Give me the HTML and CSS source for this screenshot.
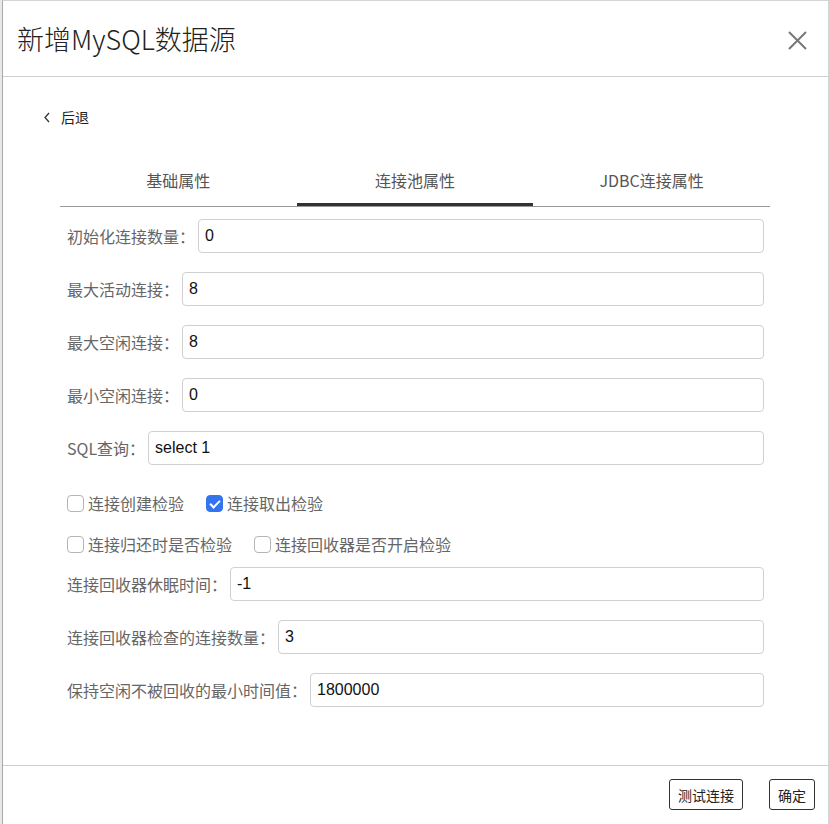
FILE: index.html
```html
<!DOCTYPE html>
<html lang="zh-CN">
<head>
  <meta charset="UTF-8">
  <title>新增MySQL数据源</title>
  <link rel="stylesheet" href="styles.css">
</head>
<body>

  <div class="dialog">
    <div class="dialog-header">
      <h2>新增MySQL数据源</h2>
      <span class="close">
        <svg width="19" height="19" viewBox="0 0 19 19"><path d="M1 1 L18 18 M18 1 L1 18" stroke="#777" stroke-width="2" fill="none"/></svg>
      </span>
    </div>

    <div class="dialog-body">
      <div class="back">
        <svg width="8" height="11" viewBox="0 0 8 11"><polyline points="6,1 2,5.5 6,10" stroke="#333" stroke-width="1.3" fill="none"/></svg>
        <span>后退</span>
      </div>

      <div class="tabs">
        <div class="tab">基础属性</div>
        <div class="tab active">连接池属性</div>
        <div class="tab">JDBC连接属性</div>
      </div>

      <div class="form">
        <div class="field"><label>初始化连接数量：</label><input value="0"></div>
        <div class="field"><label>最大活动连接：</label><input value="8"></div>
        <div class="field"><label>最大空闲连接：</label><input value="8"></div>
        <div class="field"><label>最小空闲连接：</label><input value="0"></div>
        <div class="field"><label>SQL查询：</label><input value="select 1"></div>

        <div class="checks first">
          <label class="check"><input type="checkbox">连接创建检验</label>
          <label class="check"><input type="checkbox" checked>连接取出检验</label>
        </div>
        <div class="checks second">
          <label class="check"><input type="checkbox">连接归还时是否检验</label>
          <label class="check"><input type="checkbox">连接回收器是否开启检验</label>
        </div>

        <div class="field"><label>连接回收器休眠时间：</label><input value="-1"></div>
        <div class="field"><label>连接回收器检查的连接数量：</label><input value="3"></div>
        <div class="field"><label>保持空闲不被回收的最小时间值：</label><input value="1800000"></div>
      </div>
    </div>

    <div class="dialog-footer">
      <button>测试连接</button>
      <button>确定</button>
    </div>
  </div>

</body>
</html>
```

FILE: styles.css
```css
body {
  margin: 0;
  height: 824px;
  overflow: hidden;
  background: #e8e8e8;
  font-family: "Noto Sans CJK SC", sans-serif;
  color: #333;
}

.dialog {
  margin-left: 2px;
  height: 823px;
  background: #fff;
  border: 1px solid #d4d4d4;
  border-left-color: #a8a8a8;
  border-bottom: none;
}

.dialog-header {
  display: flex;
  justify-content: space-between;
  align-items: center;
  height: 75px;
  padding: 0 21px 0 14px;
  border-bottom: 1px solid #cfcfcf;
}

.dialog-header h2 {
  margin: 0;
  font-size: 27px;
  font-weight: 300;
  color: #222;
  line-height: 1;
}

.close {
  display: flex;
  margin-top: 4px;
}

.dialog-body {
  height: 688px;
  box-sizing: border-box;
  padding-top: 30px;
}

.back {
  display: flex;
  align-items: center;
  gap: 10px;
  height: 20px;
  margin-left: 40px;
  font-size: 14px;
  color: #222;
}

.tabs {
  display: flex;
  margin: 33px 58px 0 57px;
  border-bottom: 1px solid #999;
}

.tab {
  flex: 1;
  height: 40px;
  padding-bottom: 3px;
  display: flex;
  justify-content: center;
  align-items: center;
  font-size: 16px;
  color: #555;
  border-bottom: 3px solid transparent;
}

.tab.active {
  border-bottom-color: #333;
}

.form {
  padding: 12px 64px 0 64px;
}

.field {
  display: flex;
  align-items: center;
  height: 34px;
  margin-bottom: 19px;
}

.field label {
  font-size: 16px;
  color: #666;
  margin-right: 3px;
  white-space: nowrap;
}

.field input {
  flex: 1;
  height: 34px;
  box-sizing: border-box;
  border: 1px solid #d0d0d0;
  border-radius: 4px;
  padding: 0 6px;
  font-family: "Liberation Sans", sans-serif;
  font-size: 16px;
  color: #111;
}

.checks {
  display: flex;
  gap: 22px;
  height: 24px;
  align-items: center;
}

.checks.first {
  margin: 26px 0 17px;
}

.checks.second {
  margin-bottom: 11px;
}

.check {
  display: flex;
  align-items: center;
  font-size: 16px;
  color: #666;
}

.check input {
  appearance: none;
  position: relative;
  width: 17px;
  height: 17px;
  margin: 0 4px 0 0;
  border: 1px solid #b5b5b5;
  border-radius: 4px;
  background: #fff;
}

.check input:checked {
  background: #3574ef;
  border-color: #3574ef;
}

.check input:checked::after {
  content: "";
  position: absolute;
  left: 5px;
  top: 2px;
  width: 4px;
  height: 8px;
  border: solid #fff;
  border-width: 0 2px 2px 0;
  transform: rotate(45deg);
}

.dialog-footer {
  display: flex;
  justify-content: flex-end;
  gap: 26px;
  padding: 13px 13px 0 0;
  border-top: 1px solid #cfcfcf;
}

.dialog-footer button {
  height: 31px;
  padding: 0 8px;
  background: #fff;
  border: 1px solid #333;
  border-radius: 3px;
  font-family: "Noto Sans CJK SC", sans-serif;
  font-size: 14px;
  color: #222;
}
```
